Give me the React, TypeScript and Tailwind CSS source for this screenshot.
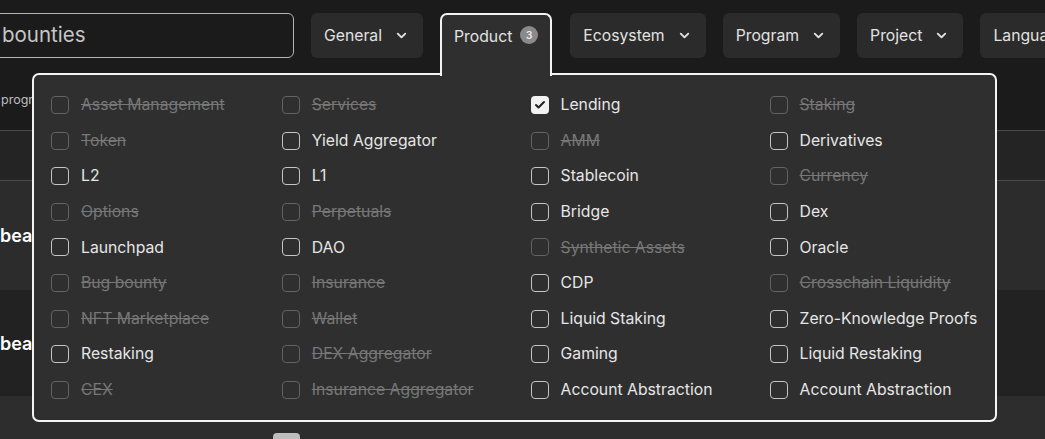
import React from 'react';
import { ChevronDown, Check } from 'lucide-react';

type Item = { label: string; disabled?: boolean; checked?: boolean };

const items: Item[] = [
  { label: 'Asset Management', disabled: true },
  { label: 'Services', disabled: true },
  { label: 'Lending', checked: true },
  { label: 'Staking', disabled: true },
  { label: 'Token', disabled: true },
  { label: 'Yield Aggregator' },
  { label: 'AMM', disabled: true },
  { label: 'Derivatives' },
  { label: 'L2' },
  { label: 'L1' },
  { label: 'Stablecoin' },
  { label: 'Currency', disabled: true },
  { label: 'Options', disabled: true },
  { label: 'Perpetuals', disabled: true },
  { label: 'Bridge' },
  { label: 'Dex' },
  { label: 'Launchpad' },
  { label: 'DAO' },
  { label: 'Synthetic Assets', disabled: true },
  { label: 'Oracle' },
  { label: 'Bug bounty', disabled: true },
  { label: 'Insurance', disabled: true },
  { label: 'CDP' },
  { label: 'Crosschain Liquidity', disabled: true },
  { label: 'NFT Marketplace', disabled: true },
  { label: 'Wallet', disabled: true },
  { label: 'Liquid Staking' },
  { label: 'Zero-Knowledge Proofs' },
  { label: 'Restaking' },
  { label: 'DEX Aggregator', disabled: true },
  { label: 'Gaming' },
  { label: 'Liquid Restaking' },
  { label: 'CEX', disabled: true },
  { label: 'Insurance Aggregator', disabled: true },
  { label: 'Account Abstraction' },
  { label: 'Account Abstraction' },
];

const FilterButton = ({ label }: { label: string }) => (
  <button className="h-[45px] flex items-center gap-[12px] pl-[13px] pr-[14px] rounded-[6px] bg-[#2b2b2b] text-[#e2e2e2] text-[15.75px] shrink-0">
    <span>{label}</span>
    <ChevronDown className="w-[15px] h-[15px]" strokeWidth={3} />
  </button>
);

const Option = ({ item }: { item: Item }) => (
  <label className="flex items-center gap-[12px] h-[20px] whitespace-nowrap">
    {item.checked ? (
      <span className="w-[18px] h-[18px] rounded-[4px] bg-[#f2f2f2] flex items-center justify-center">
        <Check className="w-[12px] h-[12px] text-[#222]" strokeWidth={4} />
      </span>
    ) : (
      <span
        className={
          item.disabled
            ? 'w-[18px] h-[18px] rounded-[4px] border-[1.5px] border-[#626262]'
            : 'w-[18px] h-[18px] rounded-[4px] border-[1.5px] border-[#c4c4c4]'
        }
      />
    )}
    <span
      className={
        item.disabled
          ? 'text-[15.75px] text-[#777777] line-through'
          : 'text-[15.75px] text-[#e6e6e6]'
      }
    >
      {item.label}
    </span>
  </label>
);

export default function App() {
  return (
    <div
      className="relative w-full h-[439px] overflow-hidden bg-[#1b1b1b]"
      style={{ fontFamily: 'Inter, "Noto Sans", sans-serif' }}
    >
      {/* filter bar */}
      <div className="flex items-start pt-[13px] h-[70px]">
        <div className="-ml-[20px] w-[314px] h-[45px] shrink-0 flex items-center pl-[21px] rounded-[6px] border-[1.5px] border-[#b5b5b5] text-[20.5px] text-[#c6c6c6]">
          bounties
        </div>
        <div className="ml-[17px]">
          <FilterButton label="General" />
        </div>
        <div className="ml-[17px] relative z-20">
          <button className="h-[63px] flex items-start pt-[10px] gap-[8px] pl-[12px] pr-[12px] rounded-t-[7px] border-2 border-b-0 border-[#f4f4f4] bg-[#2f2f2f] text-[#e2e2e2] text-[15.75px]">
            <span>Product</span>
            <span className="mt-[1px] w-[18px] h-[18px] rounded-full bg-[#8a8a8a] text-[#eee] text-[10px] font-semibold flex items-center justify-center">
              3
            </span>
          </button>
        </div>
        <div className="ml-[18px] flex gap-[17px]">
          <FilterButton label="Ecosystem" />
          <FilterButton label="Program" />
          <FilterButton label="Project" />
          <FilterButton label="Language" />
        </div>
      </div>

      {/* page content behind the popover */}
      <div className="h-[60px] flex items-center pl-[1px] text-[12.5px] text-[#bdbdbd]">programs</div>
      <div className="h-[51px] bg-[#242424] border-y border-[#4a4a4a]" />
      <div className="h-[109px] bg-[#2c2c2c] flex items-center text-[18px] font-semibold text-white">beacon</div>
      <div className="h-[106px] bg-[#222222] flex items-center text-[18px] font-semibold text-white">beacon</div>
      <div className="h-[60px] bg-[#2d2d2d] pl-[273px] pt-[37px]">
        <div className="w-[27px] h-[20px] rounded-[4px] bg-[#bdbdbd]" />
      </div>

      {/* product dropdown */}
      <div className="absolute z-10 left-[32px] top-[73px] rounded-[7px] border-2 border-[#f4f4f4] bg-[#2f2f2f] pl-[17px] pr-[18px] pt-[20px] pb-[20px]">
        <div className="grid grid-cols-[repeat(4,auto)] gap-x-[57px] gap-y-[15.6px]">
          {items.map((item, i) => (
            <Option key={i} item={item} />
          ))}
        </div>
      </div>
    </div>
  );
}
